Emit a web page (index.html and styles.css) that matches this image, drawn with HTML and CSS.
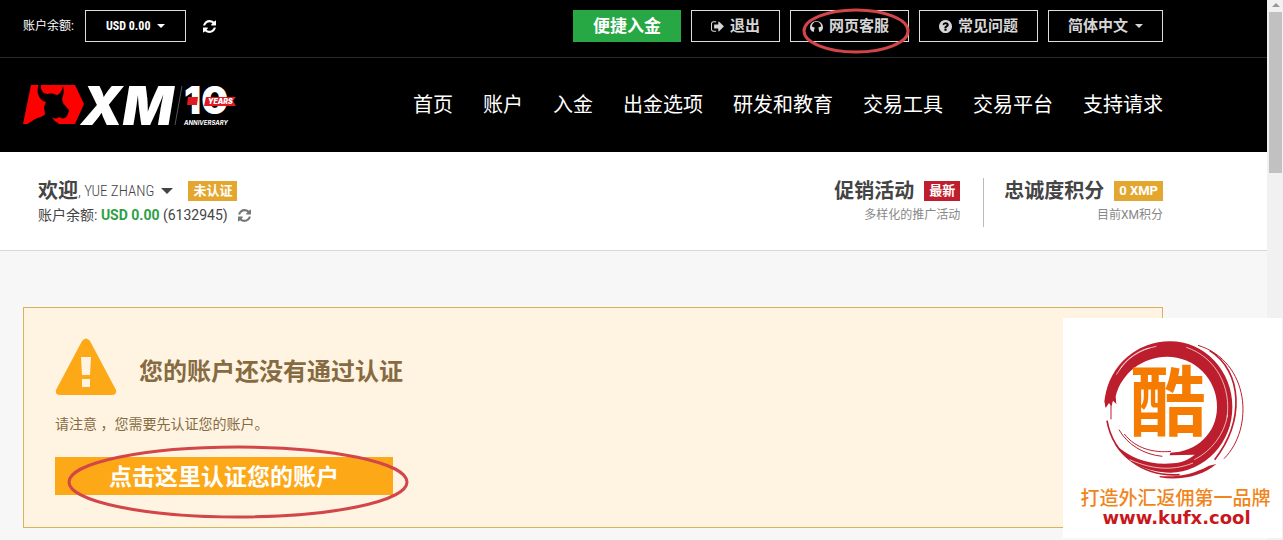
FILE: index.html
```html
<!DOCTYPE html>
<html lang="zh-CN">
<head>
    <meta charset="UTF-8">
    <meta name="viewport" content="width=device-width, initial-scale=1.0">
    <title>XM</title>
    <link rel="stylesheet" href="styles.css">
</head>
<body>
    <svg class="sprite" aria-hidden="true">
        <symbol id="refresh" viewBox="0 0 1536 1536"><path d="M1511 928q0 5-1 7-64 268-268 434.500t-478 166.500q-146 0-282.500-55t-243.500-157l-129 129q-19 19-45 19t-45-19-19-45v-448q0-26 19-45t45-19h448q26 0 45 19t19 45-19 45l-137 137q71 66 161 102t187 36q134 0 250-65t186-179q11-17 53-117 8-23 30-23h192q13 0 22.500 9.500t9.500 22.500zm25-800v448q0 26-19 45t-45 19h-448q-26 0-45-19t-19-45 19-45l138-138q-148-137-349-137-134 0-250 65t-186 179q-11 17-53 117-8 23-30 23h-199q-13 0-22.500-9.500t-9.500-22.500v-7q65-268 270-434.500t480-166.500q146 0 284 55.500t245 156.500l130-129q19-19 45-19t45 19 19 45z"/></symbol>
        <symbol id="caret" viewBox="0 0 8 4"><path d="M0 0h8L4 4z"/></symbol>
    </svg>

    <div class="page">
        <header class="header">
            <div class="topbar">
                <div class="container topbar-row">
                    <label class="balance-label" for="balance">账户余额:</label>
                    <div class="dropdown narrow">
                        <select id="balance"><option>USD 0.00</option></select>
                        <svg class="caret"><use href="#caret"/></svg>
                    </div>
                    <button class="refresh" aria-label="刷新"><svg class="icon"><use href="#refresh"/></svg></button>
                    <div class="actions">
                        <a class="btn btn-green" href="#">便捷入金</a>
                        <a class="btn" href="#">
                            <svg class="icon" viewBox="0 200 1600 1400"><path d="M640 1440q0 4 1 20t.5 26.500-3 23.500-10 19.500-20.500 6.500h-320q-119 0-203.500-84.500t-84.500-203.500v-704q0-119 84.500-203.500t203.500-84.500h320q13 0 22.500 9.500t9.500 22.500q0 4 1 20t.5 26.500-3 23.500-10 19.500-20.500 6.500h-320q-66 0-113 47t-47 113v704q0 66 47 113t113 47h312l11.500 1 11.500 3 8 5.500 7 9 2 13.500zm928-544q0 26-19 45l-544 544q-19 19-45 19t-45-19-19-45v-288h-448q-26 0-45-19t-19-45v-384q0-26 19-45t45-19h448v-288q0-26 19-45t45-19 45 19l544 544q19 19 19 45z"/></svg>
                            退出
                        </a>
                        <a class="btn marked" href="#">
                            <svg class="icon" viewBox="0 0 14 14"><path d="M0 8a7 7 0 0 1 14 0c0 2-1 3-2 4l-2 1-1-5 3-1a5 5 0 0 0-10 0l3 1-1 5-2-1C1 11 0 10 0 8z"/></svg>
                            网页客服
                            <svg class="ring ring-small" viewBox="0 0 108 46"><ellipse cx="54" cy="23" rx="52" ry="21"/></svg>
                        </a>
                        <a class="btn" href="#">
                            <svg class="icon" viewBox="0 128 1536 1536"><path d="M896 1376v-192q0-14-9-23t-23-9h-192q-14 0-23 9t-9 23v192q0 14 9 23t23 9h192q14 0 23-9t9-23zm256-672q0-88-55.500-163t-138.500-116-170-41q-243 0-371 213-15 24 8 42l132 100q7 6 19 6 16 0 25-12 53-68 86-92 34-24 86-24 48 0 85.500 26t37.500 59q0 38-20 61t-68 45q-63 28-115.500 86.500t-52.500 125.500v36q0 14 9 23t23 9h192q14 0 23-9t9-23q0-19 21.500-49.500t54.500-49.500q32-18 49-28.500t46-35 44.500-48 28-60.500 12.500-81zm384 192q0 209-103 385.500t-279.500 279.500-385.500 103-385.500-103-279.500-279.500-103-385.500 103-385.500 279.500-279.500 385.500-103 385.500 103 279.500 279.500 103 385.500z"/></svg>
                            常见问题
                        </a>
                        <div class="dropdown">
                            <select aria-label="语言"><option>简体中文</option></select>
                            <svg class="caret"><use href="#caret"/></svg>
                        </div>
                    </div>
                </div>
            </div>

            <div class="container navbar">
                <a class="logo" href="#" aria-label="XM">
                    <svg width="216" height="46" viewBox="0 0 216 46">
                        <path fill="#f00" d="M8 3h44l9 19-9 20H0z"/>
                        <path fill="#000" d="M16 2c-3 7-1 13 4 17l3 1-2 5 1 7c-1 3-8 3-13 7l-6 4h33l-1-2c-2-1-5-3-6-6 3 2 5 2 7 0 3 2 6 2 8-1l2-5c0-2-4-5-6-8l-1-4c2-4 2-9 1-13-1 5-3 8-6 9-3-1-6-2-9-1-5 0-8-4-7-10z"/>
                        <text class="logo-xm" x="58" y="43">XM</text>
                        <path stroke="#555" d="M159 4l-7 39"/>
                        <text class="logo-ten" x="161" y="32">10</text>
                        <path fill="#e11a22" d="M165 15h10l-1 8h-10zM183 15h30l-3 4 3 5h-32z"/>
                        <text class="logo-years" x="185" y="22">YEARS</text>
                        <text class="logo-anniv" x="161" y="43">ANNIVERSARY</text>
                    </svg>
                </a>
                <nav class="nav">
                    <a href="#">首页</a>
                    <a href="#">账户</a>
                    <a href="#">入金</a>
                    <a href="#">出金选项</a>
                    <a href="#">研发和教育</a>
                    <a href="#">交易工具</a>
                    <a href="#">交易平台</a>
                    <a href="#">支持请求</a>
                </nav>
            </div>
        </header>

        <section class="welcome">
            <div class="container welcome-row">
                <div class="user">
                    <div class="line">
                        <button class="user-name"><strong>欢迎</strong><span>, YUE ZHANG</span><svg class="caret caret-big"><use href="#caret"/></svg></button>
                        <span class="tag tag-yellow">未认证</span>
                    </div>
                    <div class="user-balance">
                        <span>账户余额: <b>USD 0.00</b> (6132945)</span>
                        <button class="refresh refresh-small" aria-label="刷新"><svg class="icon"><use href="#refresh"/></svg></button>
                    </div>
                </div>
                <div class="stat">
                    <div class="line"><strong>促销活动</strong><span class="tag tag-red">最新</span></div>
                    <div class="stat-note">多样化的推广活动</div>
                </div>
                <div class="stat stat-last">
                    <div class="line"><strong>忠诚度积分</strong><span class="tag tag-yellow">0 XMP</span></div>
                    <div class="stat-note">目前XM积分</div>
                </div>
            </div>
        </section>

        <main class="container">
            <div class="alert">
                <div class="alert-head">
                    <svg width="62" height="58" viewBox="0 0 62 58">
                        <path fill="#fda817" d="M27 3q4-5 8 0l26 49q1 5-4 5H5q-5 0-4-5z"/>
                        <path fill="#fff4e2" d="M26 19h10l-1 18h-8zM27 41h8v8h-8z"/>
                    </svg>
                    <h1>您的账户还没有通过认证</h1>
                </div>
                <p>请注意 ，您需要先认证您的账户。</p>
                <a class="verify marked" href="#">
                    点击这里认证您的账户
                    <svg class="ring ring-big" viewBox="0 0 342 74"><ellipse cx="171" cy="37" rx="169" ry="35"/></svg>
                </a>
            </div>
        </main>
    </div>

    <div class="scrollbar">
        <svg width="8" height="4" viewBox="0 0 8 4"><path fill="#999" d="M0 4h8L4 0z"/></svg>
        <div class="thumb"></div>
    </div>

    <aside class="watermark">
        <svg width="219" height="170" viewBox="0 0 657 510">
            <g fill="#bd1e2d">
                <path d="M126 238A196 196 0 0 1 322 70A186 196 0 0 1 508 266A190 196 0 0 1 322 464C250 462 190 435 155 378C205 425 265 442 330 436C355 434 378 425 395 410L320 412L322 404C400 404 462 345 462 268A150 150 0 0 0 312 116C240 116 175 165 158 235L160 258L150 248L145 265L138 255L128 270L124 250z"/>
                <path d="M290 478c60 12 130-5 170-40l-22 5c-50 27-95 35-148 31z"/>
            </g>
            <g fill="none" stroke="#bd1e2d" stroke-width="5">
                <path d="M440 98C540 160 545 310 455 425M132 308C150 410 240 478 350 470"/>
                <path stroke-width="3" d="M405 82C560 130 575 330 483 422M144 250v54M128 265v-30M168 335c25 45 75 75 130 80M184 348c35 45 90 57 140 52"/>
            </g>
            <path fill="none" stroke="#fff" stroke-width="2" d="M160 170c30-50 70-75 120-85M170 155c15-30 60-60 90-65M370 88c90 30 135 120 122 210M200 425c80 35 140 30 190 10M494 290c-10 60-50 110-100 135"/>
            <text class="mark-char" x="200" y="336">酷</text>
        </svg>
        <p class="mark-title">打造外汇返佣第一品牌</p>
        <p class="mark-url">www.kufx.cool</p>
    </aside>
</body>
</html>
```
FILE: styles.css
```css
* {
    box-sizing: border-box;
}
body {
    margin: 0;
    display: flex;
    min-height: 100vh;
    position: relative;
    font-family: Roboto, "Noto Sans CJK SC", sans-serif;
    font-size: 14px;
    line-height: 20px;
    color: #444;
    background: #f7f7f7;
}
a {
    color: inherit;
    text-decoration: none;
}
button, select {
    font: inherit;
    color: inherit;
    background: none;
    border: none;
    padding: 0;
    cursor: pointer;
}
select {
    appearance: none;
}
p, h1 {
    margin: 0;
}
.sprite {
    display: none;
}
.page {
    flex: 1;
    min-width: 0;
}
.container {
    max-width: 1140px;
    margin-left: 23px;
}
.icon {
    width: 13px;
    height: 13px;
    fill: currentColor;
}
.caret {
    width: 8px;
    height: 4px;
    fill: currentColor;
}

/* Header */
.header {
    background: #000;
    color: #fff;
}
.topbar {
    border-bottom: 1px solid #2a2a2a;
}
.topbar-row {
    display: flex;
    align-items: center;
    padding: 10px 0 15px;
}
.balance-label {
    font-size: 12px;
    margin-right: 11px;
}
.btn, .dropdown {
    display: flex;
    align-items: center;
    gap: 6px;
    height: 32px;
    padding: 0 19px;
    border: 1px solid #ddd;
    color: #d6d6d6;
    font-size: 15px;
    font-weight: bold;
    white-space: nowrap;
}
.btn-green {
    background: #28a745;
    border-color: #28a745;
    color: #fff;
    font-size: 17px;
}
.narrow {
    padding: 0 20px;
    color: #fff;
    font-family: "Roboto Condensed", "Liberation Sans Narrow", Roboto, sans-serif;
    font-size: 12px;
}
.refresh {
    display: flex;
    margin-left: 17px;
}
.refresh-small {
    margin-left: 10px;
    color: #777;
}
.actions {
    display: flex;
    gap: 10px;
    margin-left: auto;
}
.marked {
    position: relative;
}
.ring {
    position: absolute;
    fill: none;
    stroke: #d2464a;
    stroke-width: 3;
    pointer-events: none;
}
.ring-small {
    left: 11px;
    top: -3px;
    width: 108px;
    height: 46px;
}
.ring-big {
    left: 12px;
    top: -12px;
    width: 342px;
    height: 74px;
}
.navbar {
    display: flex;
    align-items: center;
    justify-content: space-between;
    height: 94px;
}
.logo svg {
    display: block;
    overflow: visible;
}
.logo text {
    fill: #fff;
    font-family: Inter, "Liberation Sans", sans-serif;
    font-style: italic;
    font-weight: 900;
}
.logo .logo-xm {
    font-size: 53px;
}
.logo .logo-ten {
    font-size: 38px;
    font-style: normal;
}
.logo .logo-years {
    font-size: 7px;
}
.logo .logo-anniv {
    font-size: 6px;
    font-weight: 700;
}
.nav {
    display: flex;
    gap: 30px;
    font-size: 20px;
}

/* Welcome bar */
.welcome {
    background: #fff;
    border-bottom: 1px solid #d8d8d8;
}
.welcome-row {
    display: flex;
    padding: 26px 0 23px 15px;
}
.line {
    display: flex;
    align-items: center;
    gap: 10px;
    height: 26px;
    font-size: 20px;
}
.user {
    flex: 1;
}
.user-name {
    display: flex;
    align-items: center;
    margin-right: 5px;
    font-family: "Roboto Condensed", "Liberation Sans Narrow", Roboto, "Noto Sans CJK SC", sans-serif;
}
.user-name span {
    font-size: 15px;
    font-weight: 300;
}
.caret-big {
    width: 12px;
    height: 6px;
    margin-left: 7px;
}
.tag {
    height: 20px;
    padding: 0 5px;
    color: #fff;
    font-size: 13px;
    font-weight: bold;
    line-height: 20px;
}
.tag-yellow {
    background: #e3a72f;
}
.tag-red {
    background: #bf1e2e;
}
.user-balance {
    display: flex;
    align-items: center;
    line-height: 23px;
}
.user-balance b {
    color: #2fa045;
}
.stat {
    padding-right: 23px;
}
.stat-last {
    padding: 0 0 0 20px;
    border-left: 1px solid #bbb;
}
.stat-note {
    font-size: 12px;
    line-height: 23px;
    text-align: right;
    color: #888;
}

/* Alert */
.alert {
    margin-top: 56px;
    padding: 30px 32px 32px 31px;
    border: 1px solid #d9b35c;
    background: #fff4e2;
    color: #866b42;
}
.alert-head {
    display: flex;
    align-items: flex-end;
    gap: 22px;
}
.alert h1 {
    font-size: 24px;
    line-height: 48px;
}
.alert p {
    margin: 18px 0 22px;
    line-height: 21px;
}
.verify {
    display: inline-block;
    padding: 3px 54px 0;
    background: #fda817;
    color: #fff;
    font-size: 23px;
    font-weight: bold;
    line-height: 35px;
    vertical-align: top;
}

/* Scrollbar */
.scrollbar {
    width: 16px;
    padding: 3px 1px 0 2px;
    background: #f1f1f1;
    text-align: center;
}
.scrollbar svg {
    display: block;
    margin: 0 auto 5px;
}
.thumb {
    height: 161px;
    background: #c1c1c1;
}

/* Corner mark */
.watermark {
    position: absolute;
    right: 1px;
    bottom: 2px;
    width: 219px;
    height: 220px;
    background: #fff;
    text-align: center;
    white-space: nowrap;
}
.watermark svg {
    display: block;
}
.mark-char {
    fill: #f57c00;
    font-family: "Noto Sans CJK SC", sans-serif;
    font-size: 228px;
    font-weight: 700;
}
.mark-title {
    padding-left: 6px;
    color: #f0851c;
    font-size: 19px;
    font-weight: 500;
    line-height: 22px;
}
.mark-url {
    padding-left: 8px;
    color: #c8181e;
    font-family: "DejaVu Sans", sans-serif;
    font-size: 18px;
    font-weight: bold;
    line-height: 16px;
}
```
